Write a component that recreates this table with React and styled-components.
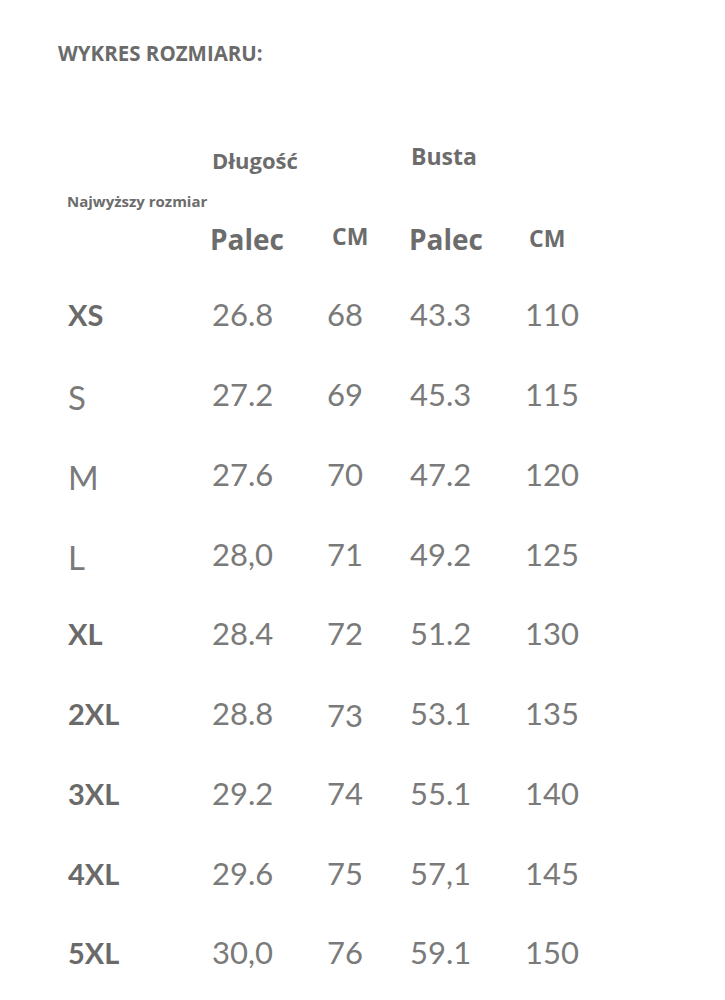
import React from "react";
import styled, { createGlobalStyle } from "styled-components";

const Global = createGlobalStyle`
  html, body { margin: 0; padding: 0; background: #ffffff; }
  body { font-family: Lato, "Liberation Sans", sans-serif; }
`;

const Page = styled.div`
  width: 725px;
  min-height: 1000px;
  background: #ffffff;
  overflow: hidden;
`;

const Title = styled.h1`
  margin: 0;
  padding: 43px 0 0 58px;
  font-family: "Open Sans", Lato, sans-serif;
  font-weight: 700;
  font-size: 20.5px;
  line-height: 20px;
  color: #6b6b6b;
`;

const COLS = "144px 115px 83px 115px 1fr";

const Head = styled.div`
  display: grid;
  grid-template-columns: ${COLS};
  grid-template-rows: 36px 50px 25px;
  padding-left: 68px;
  margin-top: 77px;
  align-items: center;
`;

const HeadCell = styled.div`
  grid-column: ${(p) => p.$col};
  grid-row: ${(p) => p.$row};
  font-family: "Open Sans", Lato, sans-serif;
  font-weight: 700;
  font-size: ${(p) => p.$size}px;
  line-height: 1;
  color: #6c6c6c;
  white-space: nowrap;
  margin-left: ${(p) => p.$dx || 0}px;
  transform: translateY(${(p) => p.$dy || 0}px);
`;

const Body = styled.div`
  display: grid;
  grid-template-columns: ${COLS};
  grid-auto-rows: 79.75px;
  padding-left: 68px;
  margin-top: 24px;
  align-items: center;
`;

const SizeLabel = styled.div`
  font-family: Lato, sans-serif;
  font-weight: ${(p) => (p.$bold ? 700 : 400)};
  font-size: ${(p) => (p.$bold ? 29 : 33)}px;
  line-height: 1;
  color: ${(p) => (p.$bold ? "#6a6a6a" : "#7a7a7a")};
  transform: translateY(${(p) => (p.$bold ? 0 : 3)}px);
`;

const Value = styled.div`
  font-family: Lato, sans-serif;
  font-weight: 400;
  font-size: 31px;
  line-height: 1;
  color: #7a7a7a;
  transform: translateY(${(p) => p.$dy || 0}px);
`;

const rows = [
  ["XS", true, "26.8", "68", "43.3", "110"],
  ["S", false, "27.2", "69", "45.3", "115"],
  ["M", false, "27.6", "70", "47.2", "120"],
  ["L", false, "28,0", "71", "49.2", "125"],
  ["XL", true, "28.4", "72", "51.2", "130"],
  ["2XL", true, "28.8", "73", "53.1", "135"],
  ["3XL", true, "29.2", "74", "55.1", "140"],
  ["4XL", true, "29.6", "75", "57,1", "145"],
  ["5XL", true, "30,0", "76", "59.1", "150"],
];

export default function App() {
  return (
    <Page>
      <Global />
      <Title>WYKRES ROZMIARU:</Title>
      <Head>
        <HeadCell $col={2} $row={1} $size={22} $dy={2}>Długość</HeadCell>
        <HeadCell $col={4} $row={1} $size={23} $dy={-2} $dx={1}>Busta</HeadCell>
        <HeadCell $col={1} $row={2} $size={15} $dx={-1}>Najwyższy rozmiar</HeadCell>
        <HeadCell $col={2} $row={3} $size={28} $dx={-2}>Palec</HeadCell>
        <HeadCell $col={3} $row={3} $size={23} $dx={5} $dy={-2}>CM</HeadCell>
        <HeadCell $col={4} $row={3} $size={28} $dx={-1}>Palec</HeadCell>
        <HeadCell $col={5} $row={3} $size={23} $dx={4}>CM</HeadCell>
      </Head>
      <Body>
        {rows.map(([size, bold, a, b, c, d]) => (
          <React.Fragment key={size}>
            <SizeLabel $bold={bold}>{size}</SizeLabel>
            <Value>{a}</Value>
            <Value $dy={b === "73" ? 2 : 0}>{b}</Value>
            <Value>{c}</Value>
            <Value>{d}</Value>
          </React.Fragment>
        ))}
      </Body>
    </Page>
  );
}
